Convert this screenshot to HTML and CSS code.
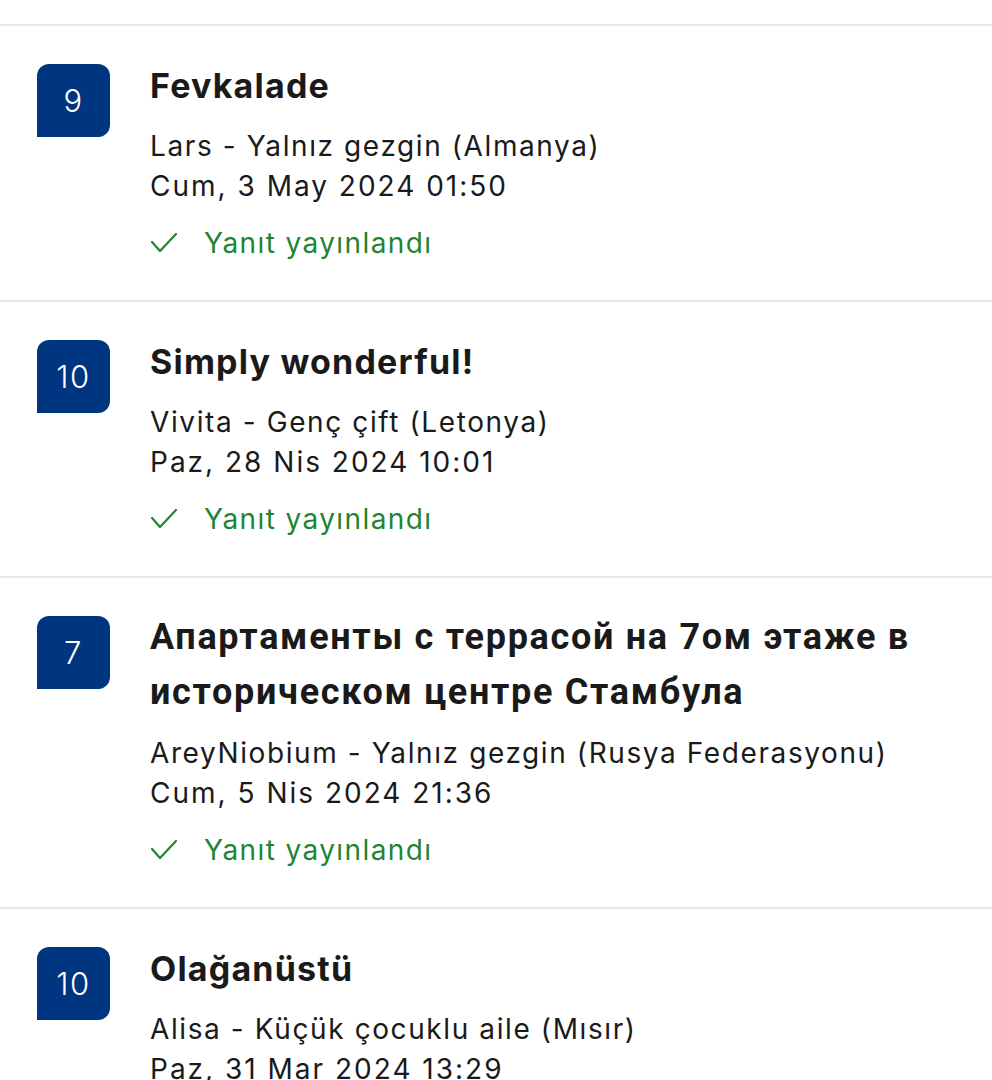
FILE: index.html
```html
<!DOCTYPE html>
<html lang="tr">
  <head>
    <meta charset="UTF-8" />
    <meta name="viewport" content="width=device-width, initial-scale=1.0" />
    <title>Değerlendirmeler</title>
    <link rel="stylesheet" href="styles.css">
  </head>
  <body>
    <ul class="reviews">
      <li class="review">
        <div class="score">9</div>
        <div class="review-body">
          <h3 class="review-title">Fevkalade</h3>
          <p class="review-meta">Lars - Yalnız gezgin (Almanya)</p>
          <p class="review-meta review-date">Cum, 3 May 2024 01:50</p>
          <div class="reply-status">
            <svg class="check" viewBox="0 0 28 24" width="28" height="24">
              <polyline points="2,11 10,20 26,3" />
            </svg>
            <span>Yanıt yayınlandı</span>
          </div>
        </div>
      </li>
      <li class="review">
        <div class="score">10</div>
        <div class="review-body">
          <h3 class="review-title">Simply wonderful!</h3>
          <p class="review-meta">Vivita - Genç çift (Letonya)</p>
          <p class="review-meta review-date">Paz, 28 Nis 2024 10:01</p>
          <div class="reply-status">
            <svg class="check" viewBox="0 0 28 24" width="28" height="24">
              <polyline points="2,11 10,20 26,3" />
            </svg>
            <span>Yanıt yayınlandı</span>
          </div>
        </div>
      </li>
      <li class="review">
        <div class="score">7</div>
        <div class="review-body">
          <h3 class="review-title cyr">Апартаменты с террасой на 7ом этаже в историческом центре Стамбула</h3>
          <p class="review-meta">AreyNiobium - Yalnız gezgin (Rusya Federasyonu)</p>
          <p class="review-meta review-date">Cum, 5 Nis 2024 21:36</p>
          <div class="reply-status">
            <svg class="check" viewBox="0 0 28 24" width="28" height="24">
              <polyline points="2,11 10,20 26,3" />
            </svg>
            <span>Yanıt yayınlandı</span>
          </div>
        </div>
      </li>
      <li class="review">
        <div class="score">10</div>
        <div class="review-body">
          <h3 class="review-title">Olağanüstü</h3>
          <p class="review-meta">Alisa - Küçük çocuklu aile (Mısır)</p>
          <p class="review-meta review-date">Paz, 31 Mar 2024 13:29</p>
          <div class="reply-status">
            <svg class="check" viewBox="0 0 28 24" width="28" height="24">
              <polyline points="2,11 10,20 26,3" />
            </svg>
            <span>Yanıt yayınlandı</span>
          </div>
        </div>
      </li>
    </ul>
  </body>
</html>
```

FILE: styles.css
```css
body {
  margin: 0;
  background-color: #fff;
  font-family: "Inter", "Noto Sans", sans-serif;
  color: #1a1a1a;
}

.reviews {
  list-style: none;
  margin: 0;
  padding: 24px 0 0;
}

.review {
  display: flex;
  gap: 40px;
  padding: 32px 37px 37px;
  border-top: 2px solid #e7e7e7;
}

.score {
  flex: none;
  width: 73px;
  height: 73px;
  margin-top: 6px;
  display: flex;
  align-items: center;
  justify-content: center;
  background-color: #003580;
  color: #fff;
  font-size: 31px;
  font-weight: 300;
  letter-spacing: 1.5px;
  border-radius: 12px 12px 12px 0;
}

.review-body {
  flex: 1;
}

.review-title {
  margin: 0 0 13px;
  font-size: 34px;
  line-height: 55px;
  font-weight: 700;
  letter-spacing: 1.2px;
}

.review-title.cyr {
  font-family: "Roboto", sans-serif;
  font-size: 36px;
  letter-spacing: 1.7px;
}

.review-meta {
  margin: 0;
  font-size: 28px;
  line-height: 40px;
  letter-spacing: 1.6px;
}

.review-date {
  letter-spacing: 2px;
}

.reply-status {
  display: flex;
  align-items: center;
  gap: 26px;
  margin-top: 17px;
  color: #1f8532;
  font-size: 28px;
  line-height: 40px;
  letter-spacing: 1.4px;
}

.check {
  fill: none;
  stroke: #1f8532;
  stroke-width: 2.2;
  stroke-linecap: round;
  stroke-linejoin: round;
}
```
